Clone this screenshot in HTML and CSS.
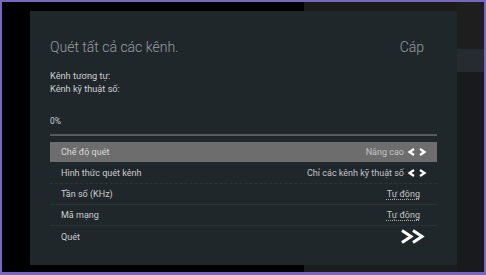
FILE: index.html
```html
<!DOCTYPE html>
<html lang="vi">
<head>
    <meta charset="UTF-8">
    <title>Quét kênh</title>
    <link rel="stylesheet" href="styles.css">
</head>
<body>
<div class="frame">
    <div class="panel">
        <div class="head">
            <span class="title">Quét tất cả các kênh.</span>
            <span class="title">Cáp</span>
        </div>
        <div class="counts">
            <p>Kênh tương tự:</p>
            <p>Kênh kỹ thuật số:</p>
        </div>
        <p class="percent">0%</p>
        <div class="progress"></div>
        <ul class="menu">
            <li class="row active">
                <span>Chế độ quét</span>
                <span class="value">Nâng cao
                    <svg class="lr" width="20" height="10" viewBox="0 0 20 10"><polyline points="7,2 2.5,5 7,8"/><polyline points="13,2 17.5,5 13,8"/></svg>
                </span>
            </li>
            <li class="row">
                <span>Hình thức quét kênh</span>
                <span class="value">Chỉ các kênh kỹ thuật số
                    <svg class="lr" width="20" height="10" viewBox="0 0 20 10"><polyline points="7,2 2.5,5 7,8"/><polyline points="13,2 17.5,5 13,8"/></svg>
                </span>
            </li>
            <li class="row dotted">
                <span>Tần số (KHz)</span>
                <span class="value"><u>Tự động</u></span>
            </li>
            <li class="row">
                <span>Mã mạng</span>
                <span class="value"><u>Tự động</u></span>
            </li>
            <li class="row last">
                <span>Quét</span>
                <span class="value">
                    <svg class="go" width="26" height="15" viewBox="0 0 26 15"><polyline points="2,1.5 11,7.5 2,13.5"/><polyline points="13,1.5 22,7.5 13,13.5"/></svg>
                </span>
            </li>
        </ul>
    </div>
    <div class="side">
        <div class="side_top"></div>
        <div class="side_band"></div>
        <div class="side_rest"></div>
    </div>
</div>
</body>
</html>
```

FILE: styles.css
```css
body
{
    margin: 0px;
    background: #000;
    font-family: Roboto, "Liberation Sans", sans-serif;
}
.frame{
    width: 486px;
    height: 275px;
    box-sizing: border-box;
    border: 2px solid #7766c6;
    border-bottom-width: 3px;
    display: flex;
    background: linear-gradient(to right, #000 302px, #1c1c1c 302px);
}
.panel{
    margin: 9px 0 0 28px;
    width: 427px;
    height: 254px;
    box-sizing: border-box;
    padding: 0 20px;
    background: #20272b;
    color: #cdcfd0;
}
.head{
    display: flex;
    justify-content: space-between;
    padding-top: 27px;
    padding-right: 13px;
}
.title{
    font-size: 14px;
    font-weight: 300;
    line-height: 18px;
    color: #9a9fa2;
}
.counts{
    margin-top: 13px;
    font-size: 9.2px;
    line-height: 13px;
}
.counts p, .percent{
    margin: 0;
}
.percent{
    margin-top: 20px;
    font-size: 8.5px;
    line-height: 13px;
}
.progress{
    margin-top: 6px;
    height: 2px;
    background: #575c60;
}
.menu{
    list-style: none;
    margin: 6px 0 0 0;
    padding: 0;
}
.row{
    display: flex;
    justify-content: space-between;
    align-items: center;
    height: 20px;
    padding: 0 10px 0 11px;
    border-top: 1px solid #2c3337;
    font-size: 9px;
}
.row.active{
    height: 20px;
    border-top: none;
    background-color: #6d6d6d;
    background-image: radial-gradient(#7a7a7a 0.6px, transparent 0.7px);
    background-size: 4px 4px;
    color: #dcdcdc;
}
.row.active + .row{
    border-top-color: transparent;
}
.row.dotted{
    border-top: 1px dashed #2e3539;
}
.row.last{
    height: 21px;
}
.value{
    display: flex;
    align-items: center;
    gap: 3px;
    color: #c2c4c5;
}
.value u{
    margin-right: 7px;
    text-decoration: underline dotted #aaa;
    text-underline-offset: 2px;
}
.lr polyline{
    fill: none;
    stroke: #fff;
    stroke-width: 2.2;
}
.go{
    margin-right: 1px;
}
.go polyline{
    fill: none;
    stroke: #fff;
    stroke-width: 3;
}
.side{
    width: 27px;
    display: flex;
    flex-direction: column;
}
.side_top{
    height: 47px;
    background: #1e1e1e;
}
.side_band{
    height: 23px;
    background: #262b30;
}
.side_rest{
    flex: 1;
    background: #191a1b;
}
```
